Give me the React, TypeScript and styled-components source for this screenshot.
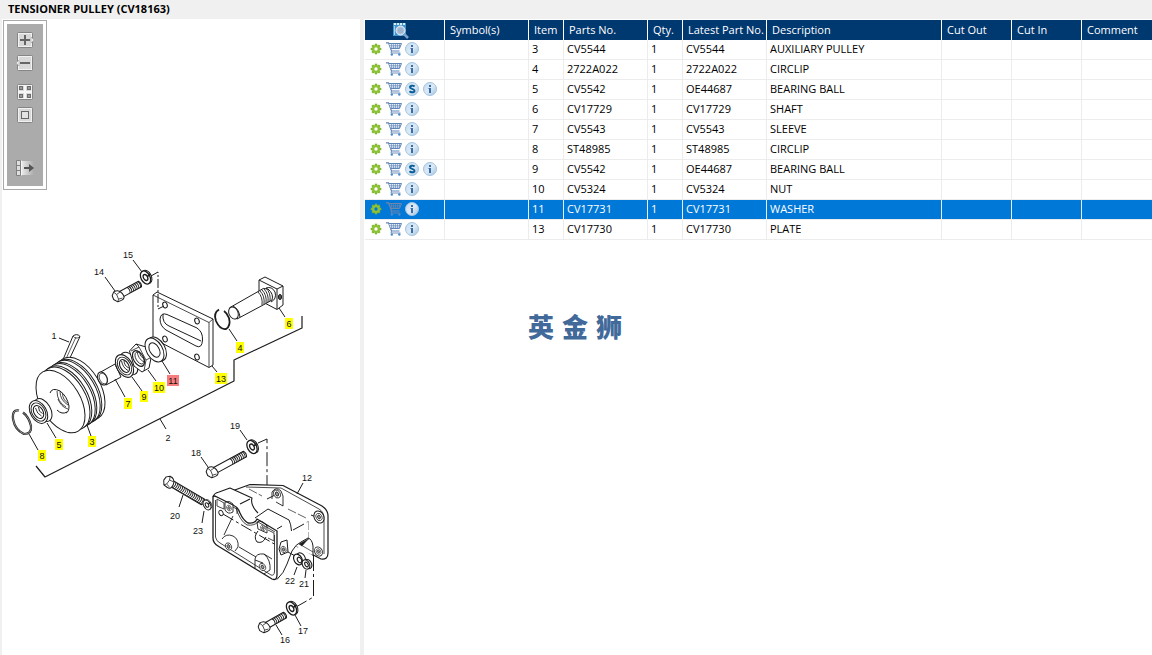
import React, { useState } from "react";
import styled, { createGlobalStyle } from "styled-components";

const GlobalStyle = createGlobalStyle`
  * { box-sizing: border-box; }
  html, body, #root { height: 100%; }
  body {
    margin: 0;
    background: #f0f0f0;
    color: #000;
    font-family: "Open Sans", "Noto Sans", "Noto Sans CJK SC", sans-serif;
    font-size: 11px;
  }
`;

const Page = styled.div`
  display: flex;
  flex-direction: column;
  min-height: 100%;
`;

const TitleBar = styled.h1`
  margin: 0;
  height: 19px;
  padding-left: 8px;
  font-size: 11px;
  font-weight: 700;
  line-height: 17px;
`;

const Workspace = styled.main`
  display: flex;
  flex: 1;
  gap: 4px;
  padding-left: 2px;
`;

const DrawingPanel = styled.section`
  flex: none;
  width: 358px;
  padding-top: 1px;
  background: #fff;
`;

const ListPanel = styled.section`
  flex: 1;
  min-width: 0;
  padding: 1px 0 0 1px;
  background: #fff;
`;

const ToolFrame = styled.div`
  width: 44px;
  margin-left: 1px;
  padding: 3px;
  border: 1px solid #a9a9a9;
`;

const ToolBar = styled.div`
  display: flex;
  flex-direction: column;
  align-items: center;
  padding: 8px 0 10px;
  background: #ababab;
`;

const ToolGroup = styled.div<{ $after?: number }>`
  display: flex;
  flex-direction: column;
  gap: 7px;
  margin-bottom: ${(p) => p.$after ?? 0}px;
`;

const IconButton = styled.button`
  display: flex;
  align-items: center;
  justify-content: center;
  width: 18px;
  height: 16px;
  padding: 0;
  border: 0;
  background: none;
  cursor: pointer;
`;

const Drawing = styled.svg`
  display: block;
  width: 358px;
  height: 465px;
  font-family: "Liberation Sans", Arial, sans-serif;
  font-size: 9px;
`;

const PartsTable = styled.table`
  width: 100%;
  table-layout: fixed;
  border-collapse: separate;
  border-spacing: 0;
`;

const Column = styled.col<{ $width?: number }>`
  width: ${(p) => (p.$width ? `${p.$width}px` : "auto")};
`;

const HeadCell = styled.th`
  height: 20px;
  padding: 0 0 0 5px;
  border-right: 1px solid #fff;
  background: #003870;
  color: #fff;
  font-size: 11px;
  font-weight: 400;
  line-height: 20px;
  text-align: left;
  white-space: nowrap;
  &:last-child { border-right: 0; }
`;

const HeadAction = styled.div`
  display: flex;
  justify-content: center;
  padding-right: 14px;
`;

const Row = styled.tr<{ $selected: boolean }>`
  background: ${(p) => (p.$selected ? "#0078d7" : "#fff")};
  color: ${(p) => (p.$selected ? "#fff" : "#000")};
`;

const Cell = styled.td`
  height: 20px;
  padding: 0 0 2px 3px;
  border-right: 1px solid #ececec;
  border-bottom: 1px solid #ececec;
  line-height: 17px;
  white-space: nowrap;
  &:last-child { border-right: 0; }
`;

const ActionCell = styled(Cell)`
  padding-left: 2px;
`;

const Actions = styled.div`
  display: flex;
`;

const Brand = styled.p`
  display: flex;
  gap: 8px;
  margin: 66px 0 0 163px;
  color: #41699a;
  font-family: "Noto Sans CJK SC", sans-serif;
  font-size: 26px;
  font-weight: 900;
  line-height: 40px;
`;

/* ---------- toolbar icons ---------- */

const Plate = () => (
  <>
    <rect x="1.5" y="0.5" width="15" height="15" rx="1" fill="#d9d9d9" stroke="#858585" />
    <rect x="2.5" y="1.5" width="13" height="13" fill="none" stroke="#f1f1f1" />
  </>
);

const ZoomInIcon = () => (
  <svg width="18" height="16">
    <Plate />
    <path d="M15 5l3 3-3 3z" fill="#eee" stroke="#999" strokeWidth=".5" />
    <path d="M4 8h10M9 3v10" stroke="#666" strokeWidth="2" />
  </svg>
);

const ZoomOutIcon = () => (
  <svg width="18" height="16">
    <Plate />
    <path d="M3 5L0 8l3 3z" fill="#eee" stroke="#999" strokeWidth=".5" />
    <path d="M4 8h10" stroke="#666" strokeWidth="2" />
  </svg>
);

const TilesIcon = () => (
  <svg width="18" height="16">
    <Plate />
    <path d="M9 1v14M2 8h14" stroke="#f6f6f6" strokeWidth="2" />
    {[[3.5, 2.5], [11.5, 2.5], [3.5, 10.5], [11.5, 10.5]].map(([x, y]) => (
      <rect key={`${x}-${y}`} x={x} y={y} width="3" height="3" fill="#999" stroke="#6c6c6c" />
    ))}
  </svg>
);

const FitIcon = () => (
  <svg width="18" height="16">
    <Plate />
    <rect x="5.5" y="4.5" width="7" height="7" fill="#e2e2e2" stroke="#666" />
  </svg>
);

const ExportIcon = () => (
  <svg width="18" height="16">
    <defs>
      <linearGradient id="exportFade">
        <stop offset="0" stopColor="#e8e8e8" />
        <stop offset="1" stopColor="#ababab" />
      </linearGradient>
    </defs>
    <rect x="6" y="1" width="12" height="14" fill="url(#exportFade)" />
    <path d="M.5 .5h4v15h-4zM.5 5.500h4M.5 10.500h4" fill="#dedede" stroke="#808080" />
    <path d="M5.500 .5v15" stroke="#f5f5f5" />
    <path d="M8 8h6" stroke="#555" strokeWidth="2" />
    <path d="M13 4l5 4-5 4z" fill="#555" />
  </svg>
);

/* ---------- table icons ---------- */

const BookSearchIcon = () => (
  <svg width="17" height="17">
    <path d="M1 1h13v13H1z" fill="#3f93cf" />
    <path d="M2 2h12" stroke="#d9ecf8" strokeWidth="2" strokeDasharray="2 1" />
    <path d="M2.500 4v9" stroke="#a9d2ee" />
    <circle cx="8.5" cy="8.5" r="4.5" fill="#c3d3e4" stroke="#e9f1f8" />
    <circle cx="8.5" cy="8.5" r="3.5" fill="#9db5d0" stroke="#b7c9dc" />
    <path d="M12 12l4 4" stroke="#7fa2cc" strokeWidth="2.5" />
  </svg>
);

const GearIcon = ({ hole }: { hole: string }) => (
  <svg width="12" height="12" viewBox="-6 -6 12 12">
    {[0, 45, 90, 135].map((a) => (
      <rect key={a} x="-1.2" y="-5.3" width="2.4" height="10.6" fill="#7db52d" transform={`rotate(${a})`} />
    ))}
    <circle r="4" fill="#8cc234" />
    <circle r="1.7" fill={hole} />
  </svg>
);

const CartIcon = ({ onDark }: { onDark: boolean }) => (
  <svg width="16" height="14" fill="none" stroke={onDark ? "#6f86ad" : "#6086b8"}>
    <path d="M0 .8h2.500L5.500 9H13.500" strokeWidth="1.2" />
    <path d="M3 1.500h12.500L13.500 6.500H5" fill={onDark ? "none" : "#e6eef7"} />
    <path d="M4 3.500h11M4.500 5h9.500" strokeWidth=".5" />
    <path d="M5.500 2v5M7.500 2v5M9.500 2v5M11.500 2v5M13.500 2v4" strokeWidth=".6" />
    <path d="M5.500 9l-.5 2h9.500" strokeWidth=".9" />
    <circle cx="5.8" cy="12.5" r="1.2" fill="#4b8ccb" stroke="none" />
    <circle cx="13.3" cy="12.5" r="1.2" fill="#4b8ccb" stroke="none" />
  </svg>
);

const Disc = ({ id }: { id: string }) => (
  <>
    <defs>
      <linearGradient id={id} x1="0" y1="0" x2="1" y2="1">
        <stop offset="0" stopColor="#c2dbee" />
        <stop offset=".5" stopColor="#dceaf5" />
        <stop offset="1" stopColor="#9fc3df" />
      </linearGradient>
    </defs>
    <circle cx="7" cy="7" r="6.5" fill={`url(#${id})`} stroke="#a3c3de" />
  </>
);

const InfoIcon = () => (
  <svg width="14" height="14">
    <Disc id="infoDisc" />
    <path d="M6 3h2v2H6zM5.500 6H8v5H6V7h-.5z" fill="#3d6da8" />
  </svg>
);

const SupersededIcon = () => (
  <svg width="14" height="14">
    <Disc id="superDisc" />
    <path
      d="M9.600 4.500C8.500 3.300 5 3.300 5 5.200c0 1.900 4.500 1.500 4.500 3.500 0 1.900-3.500 2-5 .6"
      fill="none"
      stroke="#0b5d96"
      strokeWidth="1.9"
    />
  </svg>
);

/* ---------- exploded drawing ---------- */

type Pt = [number, number];

/** Ring or disc seen along the assembly axis. */
const Disk = ({ x, y, rx, ry, fill = "#fff", w = 1, tilt = -30 }: {
  x: number; y: number; rx: number; ry: number; fill?: string; w?: number; tilt?: number;
}) => (
  <ellipse rx={rx} ry={ry} fill={fill} strokeWidth={w} transform={`translate(${x} ${y}) rotate(${tilt})`} />
);

const Bolt = ({ from, to, half, thread, step = 2 }: {
  from: Pt; to: Pt; half: number; thread: number; step?: number;
}) => {
  const len = Math.hypot(to[0] - from[0], to[1] - from[1]);
  const angle = (Math.atan2(to[1] - from[1], to[0] - from[0]) * 180) / Math.PI;
  const turns: number[] = [];
  for (let t = thread; t <= len; t += step) turns.push(t);
  return (
    <g transform={`translate(${from[0]} ${from[1]}) rotate(${angle})`}>
      <path d={`M3 ${-half}H${len}q2 ${half} 0 ${half * 2}H3`} fill="#fff" />
      {turns.map((t) => (
        <path key={t} d={`M${t} ${-half}q2 ${half} 0 ${half * 2}`} fill="none" strokeWidth=".9" />
      ))}
      <path d="M-2-5.500Q4-6 5 0T1 5.500L-3 5L-5.500 1L-5-3z" fill="#fff" />
      <path d="M-2-5.500L-.5-2L-1 3L-3 5M-.5-2L4-2.500M-1 3L3 4" fill="none" strokeWidth=".7" />
    </g>
  );
};

const Washer = ({ x, y, s = 1 }: { x: number; y: number; s?: number }) => (
  <g transform={`translate(${x} ${y}) scale(${s}) rotate(-28)`}>
    <ellipse cx="1.5" rx="4.5" ry="7" fill="#fff" />
    <ellipse rx="4.5" ry="7" fill="#fff" strokeWidth="1.3" />
    <ellipse rx="2" ry="3.2" fill="#fff" strokeWidth="1.3" />
    <path d="M2 0l4-1" strokeWidth="1.6" />
  </g>
);

const Socket = ({ x, y, s = 1 }: { x: number; y: number; s?: number }) => (
  <g transform={`translate(${x} ${y}) scale(${s}) rotate(-25)`}>
    <ellipse rx="3.2" ry="4.2" fill="#fff" strokeWidth=".8" />
    <ellipse rx="1.5" ry="2.2" fill="#999" strokeWidth=".8" />
  </g>
);

interface Callout { n: string; x: number; y: number; line: [number, number, number, number]; mark?: "yellow" | "red"; }

const callouts: Callout[] = [
  { n: "1", x: 54, y: 335, line: [59, 338, 69, 342] },
  { n: "2", x: 168, y: 437, line: [160, 419, 166, 429] },
  { n: "3", x: 92, y: 441, line: [87, 425, 91, 436], mark: "yellow" },
  { n: "4", x: 240, y: 347, line: [229, 329, 237, 341], mark: "yellow" },
  { n: "5", x: 59, y: 444, line: [47, 423, 56, 438], mark: "yellow" },
  { n: "6", x: 289, y: 323, line: [279, 308, 285, 317], mark: "yellow" },
  { n: "7", x: 128, y: 403, line: [115, 379, 125, 397], mark: "yellow" },
  { n: "8", x: 42, y: 455, line: [29, 434, 38, 450], mark: "yellow" },
  { n: "9", x: 144, y: 396, line: [132, 377, 142, 391], mark: "yellow" },
  { n: "10", x: 159, y: 387, line: [148, 370, 156, 381], mark: "yellow" },
  { n: "11", x: 173, y: 380, line: [162, 361, 170, 374], mark: "red" },
  { n: "12", x: 307, y: 477, line: [303, 483, 297, 494] },
  { n: "13", x: 221, y: 378, line: [212, 366, 217, 372], mark: "yellow" },
  { n: "14", x: 99, y: 271, line: [105, 277, 115, 291] },
  { n: "15", x: 128, y: 254, line: [133, 260, 142, 272] },
  { n: "16", x: 285, y: 639, line: [276, 625, 282, 635] },
  { n: "17", x: 303, y: 630, line: [295, 615, 301, 626] },
  { n: "18", x: 196, y: 452, line: [201, 457, 208, 467] },
  { n: "19", x: 235, y: 425, line: [240, 430, 247, 440] },
  { n: "20", x: 175, y: 515, line: [183, 495, 179, 507] },
  { n: "21", x: 304, y: 583, line: [305, 578, 306, 570] },
  { n: "22", x: 290, y: 580, line: [294, 575, 297, 567] },
  { n: "23", x: 198, y: 530, line: [204, 511, 202, 523] },
];

const marks = { yellow: "#ffff00", red: "#f77c7c" };

const pulleyRims: Pt[] = [[20, -13], [16.8, -10.8], [15.2, -9.8], [11.8, -7.6], [10.2, -6.6], [6.8, -4.4], [5, -3.2]];

const PulleyDrawing = () => (
  <Drawing viewBox="2 190 358 465" role="img" aria-label="Tensioner pulley exploded view">
    <g fill="none" stroke="#1c1c1c" strokeWidth="1" strokeLinejoin="round">
      {/* assembly bracket line */}
      <path d="M302 316V328L234 360V381L45 477L36 466" strokeWidth="1.2" />

      {/* mounting plate */}
      <path d="M153 295L157 292L213 319V365L209 367.500L153 338.500z" fill="#fff" />
      <path d="M153 295L209 322.500V367M209 322.500L213 319" strokeWidth=".8" />
      <path d="M167 314.500L197 328Q203 332 202.500 340Q202 349 196 346L166 330Q160 326 160 319Q161 312 167 314.500z" />
      <path d="M163 314Q162 323 169 326L201 341" />
      {[[165, 305], [197, 321], [165, 339], [197, 357]].map(([x, y]) => (
        <Disk key={`${x}-${y}`} x={x} y={y} rx={2.2} ry={3} tilt={-20} />
      ))}
      <path d="M151 276L158 272V309L164 306" strokeDasharray="9 2 2 2" />
      <Bolt from={[118, 296]} to={[140, 284]} half={3.2} thread={12} />
      <Washer x={145.5} y={277.5} />

      {/* shaft and T-block */}
      <path d="M259 280L265 277L283 286V305L277 309.500L259 300z" fill="#fff" />
      <path d="M259 280L277 289V309M277 289L283 286" />
      <ellipse cx="280" cy="297" rx="1.6" ry="2.6" fill="#555" />
      <path d="M230 307.500L259 291Q263 287 268 289Q274 294 272 300L265 304L237 319z" fill="#fff" />
      {[0, 2, 4, 6, 8].map((d) => (
        <path key={d} d={`M${258 + d} ${292 - d / 2}q5 5 4 13`} strokeWidth=".9" />
      ))}
      <path d="M266 288Q272 286 275 292Q277 299 271 302" />
      <Disk x={233.5} y={313} rx={4.5} ry={6.3} tilt={-25} />
      <path d="M233 306Q239 309 240 317" />
      <path d="M219 309.500Q213 313 216 321Q220 330 226 329Q231 326 229 318Q227 313 224 311" strokeWidth="1.8" />

      {/* key */}
      <path d="M62 362L73 336Q77 333 80 336.500L69 360" fill="#fff" />
      <path d="M65 361L76 337M73 336Q76 340 80 336.500" strokeWidth=".7" />

      {/* pulley */}
      {pulleyRims.map(([dx, dy]) => (
        <Disk key={dx} x={60.5 + dx} y={401.5 + dy} rx={19.7} ry={34.5} w={1} tilt={-31} />
      ))}
      <Disk x={60.5} y={401.5} rx={19.7} ry={34.5} tilt={-31} />
      <path d="M50 393Q52 387 60 391Q67 396 69 406Q69 412 66 413M57 410Q62 415 67 412" />
      <path d="M57 391Q57 402 66 407M60 391.500Q60 400 68 405M62.500 393Q62.500 400 68 403" strokeWidth=".8" />
      <path d="M58 399Q61 407 68 409" strokeWidth=".8" />

      {/* bearing and circlip at the front */}
      <Disk x={43} y={410} rx={7.5} ry={12.5} />
      <Disk x={38.5} y={412} rx={8} ry={12.3} />
      <Disk x={38.5} y={412} rx={6.5} ry={9.8} w={0.9} />
      <Disk x={38.5} y={412} rx={4.5} ry={7} w={1.1} />
      <path d="M35.500 408Q37 414 41.500 416M38.500 407Q38.500 412 42.500 413.500" strokeWidth=".9" />
      <path d="M19 410.500Q12 409 13 419Q15 430 24 434Q32 434 31 426Q29 417 23 412.500" strokeWidth="2.2" />
      <path d="M19 410.500Q12 409 13 419Q15 430 24 434Q32 434 31 426Q29 417 23 412.500" stroke="#ddd" strokeWidth=".6" />

      {/* spacer sleeve */}
      <path d="M99 373L115 364L121 377L106 385z" fill="#fff" />
      <Disk x={102.5} y={378.5} rx={4.5} ry={6.8} tilt={-25} w={1.1} />
      <Disk x={103.2} y={378.5} rx={3.6} ry={5.6} tilt={-25} w={0.7} />

      {/* bearing, nut, washer */}
      <Disk x={129} y={363.5} rx={7.5} ry={12.3} />
      <Disk x={124.5} y={366} rx={7.8} ry={12.3} w={1.1} />
      <Disk x={124.5} y={366} rx={6.2} ry={9.6} w={0.9} />
      <Disk x={124.5} y={366} rx={4.2} ry={7} w={1.1} />
      <path d="M121.500 361Q123 368 128 370.500M124 360Q124 366 129 368" strokeWidth=".9" />
      <path d="M129.500 351L136 344L146 347L151 358L149 368L142 372L134 366z" fill="#fff" />
      <path d="M136 344L139 347L146 360L144 371M139 347L131 351M146 360L150 358" strokeWidth=".8" />
      <Disk x={138.5} y={358.5} rx={5} ry={8.5} w={1.2} />
      <Disk x={139.5} y={358} rx={3.6} ry={6.6} w={0.8} />
      <path d="M137 351Q138 359 144 362M139 351Q140 357 144 359" strokeWidth=".8" />
      <Disk x={157} y={349} rx={8} ry={13} />
      <Disk x={154.5} y={350} rx={8} ry={13} />
      <Disk x={154.5} y={350} rx={4.7} ry={7.8} />

      {/* long bolts into the bracket */}
      <path d="M258 443L267 439V499L275 495" strokeDasharray="14 3 3 3" />
      <Bolt from={[212, 472]} to={[245, 454]} half={3.2} thread={22} />
      <Washer x={252} y={447} />
      <Bolt from={[169, 482]} to={[203, 502]} half={3.2} thread={6} />
      <Washer x={207} y={505} s={0.75} />

      {/* bracket back plate */}
      <path d="M232 491L250 484.500L283 485.500L322 506Q328 510 328 516V553Q328 560 321 559L300 548L240 515z" fill="#fff" strokeWidth="1.2" />
      <path d="M246 487L281 488L319 509Q324 512 324 518V554" strokeWidth=".8" />
      <path d="M249 489L262 496M288 509L306 518M308 521V538M303 530L308 521" strokeWidth=".7" strokeDasharray="9 2" />
      <path d="M272 499V492Q276 486 281 491L283 496V506L276 502" strokeWidth=".9" />
      <path d="M267 499L275 495M311 515L316 517" />
      <Socket x={277} y={494} />
      <Disk x={319} y={517} rx={4.8} ry={6.3} tilt={-25} />
      <Socket x={319} y={517} s={0.9} />
      <Disk x={318.5} y={551.5} rx={3.8} ry={4.8} tilt={-25} w={0.9} />
      <Socket x={318.5} y={551.5} s={0.7} />

      {/* bracket body */}
      <path d="M277 577Q285 564 289 556Q293 545 298 542L311 538L313 555L300 550L284 530z" fill="#fff" stroke="none" />
      <path d="M213 496L218 492L230 488L252 498L251 505L259 513L268 509L290 521L292 531L308 522V538L300 543Q295 547 293 552Q288 564 278 579L274 579L214 543z" fill="#fff" stroke="none" />
      <path d="M277 579.500Q284 573 287 564L292 551Q296 544 301 542L308 538Q312 539 313 546V556" />
      <path d="M299 544L309 538.500L306 541.500L302 546z" fill="#1c1c1c" strokeWidth=".5" />
      <path d="M301 545L313 552" strokeWidth=".7" />
      <path d="M213 497Q214 493 219 492L230 488L252 498Q250 505 258 513M240 504L250 499" strokeWidth="1.1" />
      <path d="M255 518L268 509L289 520Q291 524 291.500 531M293 530L304 524M277 529L282 526" />
      <path d="M213 497V538Q213 543 218 546L272 579Q277 581 277 575V531L257 519Q255 524 248 523Q243 520 240 513Q238 507 233 505L217 497Q213 495 213 497z" strokeWidth="1.3" />
      <path d="M215.500 500V537Q216 541 220 543L271 575Q274 576 274.500 572V535M236 508Q240 521 247 525Q254 526 258 522L275 532" strokeWidth=".8" />
      <path d="M217 499L224 503V509L217 506zM233 507L237 509V514M268 530L274 533V541L268 538" strokeWidth=".8" />
      <path d="M225 502Q230 500 233 504V512Q228 515 225 510zM257 522Q262 519 267 526V533L258 529z" strokeWidth=".9" />
      <path d="M258 531Q253 537 257 542Q263 544 266 537" />
      <Socket x={229} y={508} s={0.7} />
      <Socket x={263} y={528} s={0.7} />
      <Disk x={221} y={513} rx={2} ry={2.8} w={0.9} />
      <path d="M223 514L276 545M288 552L297 557" strokeDasharray="12 3 3 3" />
      <path d="M233 516L224 535M222 539Q226 533 233 536Q239 539 238 547L235 551M239 547L256 557" strokeWidth=".9" />
      <Socket x={228.5} y={546.5} s={0.9} />
      <path d="M255 568V559Q256 553 264 554L272 559M255 560L263 563M264 554Q271 560 270 570L264 574" strokeWidth=".9" />
      <Socket x={262.5} y={567} s={0.9} />
      <path d="M279 549L281 542L287 540L288 552L281 555z" fill="#fff" />
      <Socket x={283.5} y={549.5} s={0.8} />

      {/* nut, spring washer and lower bolt */}
      <Disk x={301} y={558} rx={4} ry={5.5} />
      <Disk x={298} y={559.5} rx={4} ry={5.7} w={1.2} />
      <Disk x={299.5} y={560} rx={2} ry={3} w={1.2} />
      <Disk x={308} y={564} rx={3.5} ry={5} w={1.1} />
      <Disk x={306} y={564.5} rx={3.5} ry={5} w={1.1} />
      <Disk x={306.5} y={564.5} rx={1.5} ry={2.5} w={1.1} />
      <path d="M313.500 555V597L296 607" strokeDasharray="16 3 3 3" />
      <Bolt from={[264, 627]} to={[285, 615]} half={3.2} thread={11} />
      <Washer x={291.5} y={608.5} />
    </g>
    {callouts.map(({ n, x, y, line, mark }) => (
      <g key={n}>
        <line x1={line[0]} y1={line[1]} x2={line[2]} y2={line[3]} stroke="#1c1c1c" />
        {mark && <rect x={x - n.length * 2 - 2} y={y - 5} width={n.length * 4 + 4} height="11" fill={marks[mark]} />}
        <text x={x} y={y + 4} textAnchor="middle" fill="#111">{n}</text>
      </g>
    ))}
  </Drawing>
);

/* ---------- parts list ---------- */

interface Part { item: string; part: string; latest: string; description: string; superseded?: boolean; }

const parts: Part[] = [
  { item: "3", part: "CV5544", latest: "CV5544", description: "AUXILIARY PULLEY" },
  { item: "4", part: "2722A022", latest: "2722A022", description: "CIRCLIP" },
  { item: "5", part: "CV5542", latest: "OE44687", description: "BEARING BALL", superseded: true },
  { item: "6", part: "CV17729", latest: "CV17729", description: "SHAFT" },
  { item: "7", part: "CV5543", latest: "CV5543", description: "SLEEVE" },
  { item: "8", part: "ST48985", latest: "ST48985", description: "CIRCLIP" },
  { item: "9", part: "CV5542", latest: "OE44687", description: "BEARING BALL", superseded: true },
  { item: "10", part: "CV5324", latest: "CV5324", description: "NUT" },
  { item: "11", part: "CV17731", latest: "CV17731", description: "WASHER" },
  { item: "13", part: "CV17730", latest: "CV17730", description: "PLATE" },
];

const columnWidths = [80, 84, 35, 84, 35, 84, 175, 70, 70, undefined];
const headings = ["Symbol(s)", "Item", "Parts No.", "Qty.", "Latest Part No.", "Description", "Cut Out", "Cut In", "Comment"];

export default function App() {
  const [selected, setSelected] = useState("11");
  return (
    <Page>
      <GlobalStyle />
      <TitleBar>TENSIONER PULLEY (CV18163)</TitleBar>
      <Workspace>
        <DrawingPanel>
          <ToolFrame>
            <ToolBar role="toolbar" aria-label="Drawing tools">
              <ToolGroup $after={13}>
                <IconButton aria-label="Zoom in"><ZoomInIcon /></IconButton>
                <IconButton aria-label="Zoom out"><ZoomOutIcon /></IconButton>
              </ToolGroup>
              <ToolGroup $after={37}>
                <IconButton aria-label="Tiles"><TilesIcon /></IconButton>
                <IconButton aria-label="Fit to window"><FitIcon /></IconButton>
              </ToolGroup>
              <ToolGroup>
                <IconButton aria-label="Move panel"><ExportIcon /></IconButton>
              </ToolGroup>
            </ToolBar>
          </ToolFrame>
          <PulleyDrawing />
        </DrawingPanel>
        <ListPanel>
          <PartsTable>
            <colgroup>
              {columnWidths.map((w, i) => <Column key={i} $width={w} />)}
            </colgroup>
            <thead>
              <tr>
                <HeadCell>
                  <HeadAction>
                    <IconButton aria-label="Search parts"><BookSearchIcon /></IconButton>
                  </HeadAction>
                </HeadCell>
                {headings.map((h) => <HeadCell key={h} scope="col">{h}</HeadCell>)}
              </tr>
            </thead>
            <tbody>
              {parts.map((p) => {
                const active = p.item === selected;
                return (
                  <Row key={p.item} $selected={active} onClick={() => setSelected(p.item)}>
                    <ActionCell>
                      <Actions>
                        <IconButton aria-label="Options"><GearIcon hole={active ? "#0078d7" : "#fff"} /></IconButton>
                        <IconButton aria-label="Add to cart"><CartIcon onDark={active} /></IconButton>
                        {p.superseded && <IconButton aria-label="Superseded"><SupersededIcon /></IconButton>}
                        <IconButton aria-label="Information"><InfoIcon /></IconButton>
                      </Actions>
                    </ActionCell>
                    <Cell />
                    <Cell>{p.item}</Cell>
                    <Cell>{p.part}</Cell>
                    <Cell>1</Cell>
                    <Cell>{p.latest}</Cell>
                    <Cell>{p.description}</Cell>
                    <Cell />
                    <Cell />
                    <Cell />
                  </Row>
                );
              })}
            </tbody>
          </PartsTable>
          <Brand lang="zh">
            <span>英</span>
            <span>金</span>
            <span>狮</span>
          </Brand>
        </ListPanel>
      </Workspace>
    </Page>
  );
}
